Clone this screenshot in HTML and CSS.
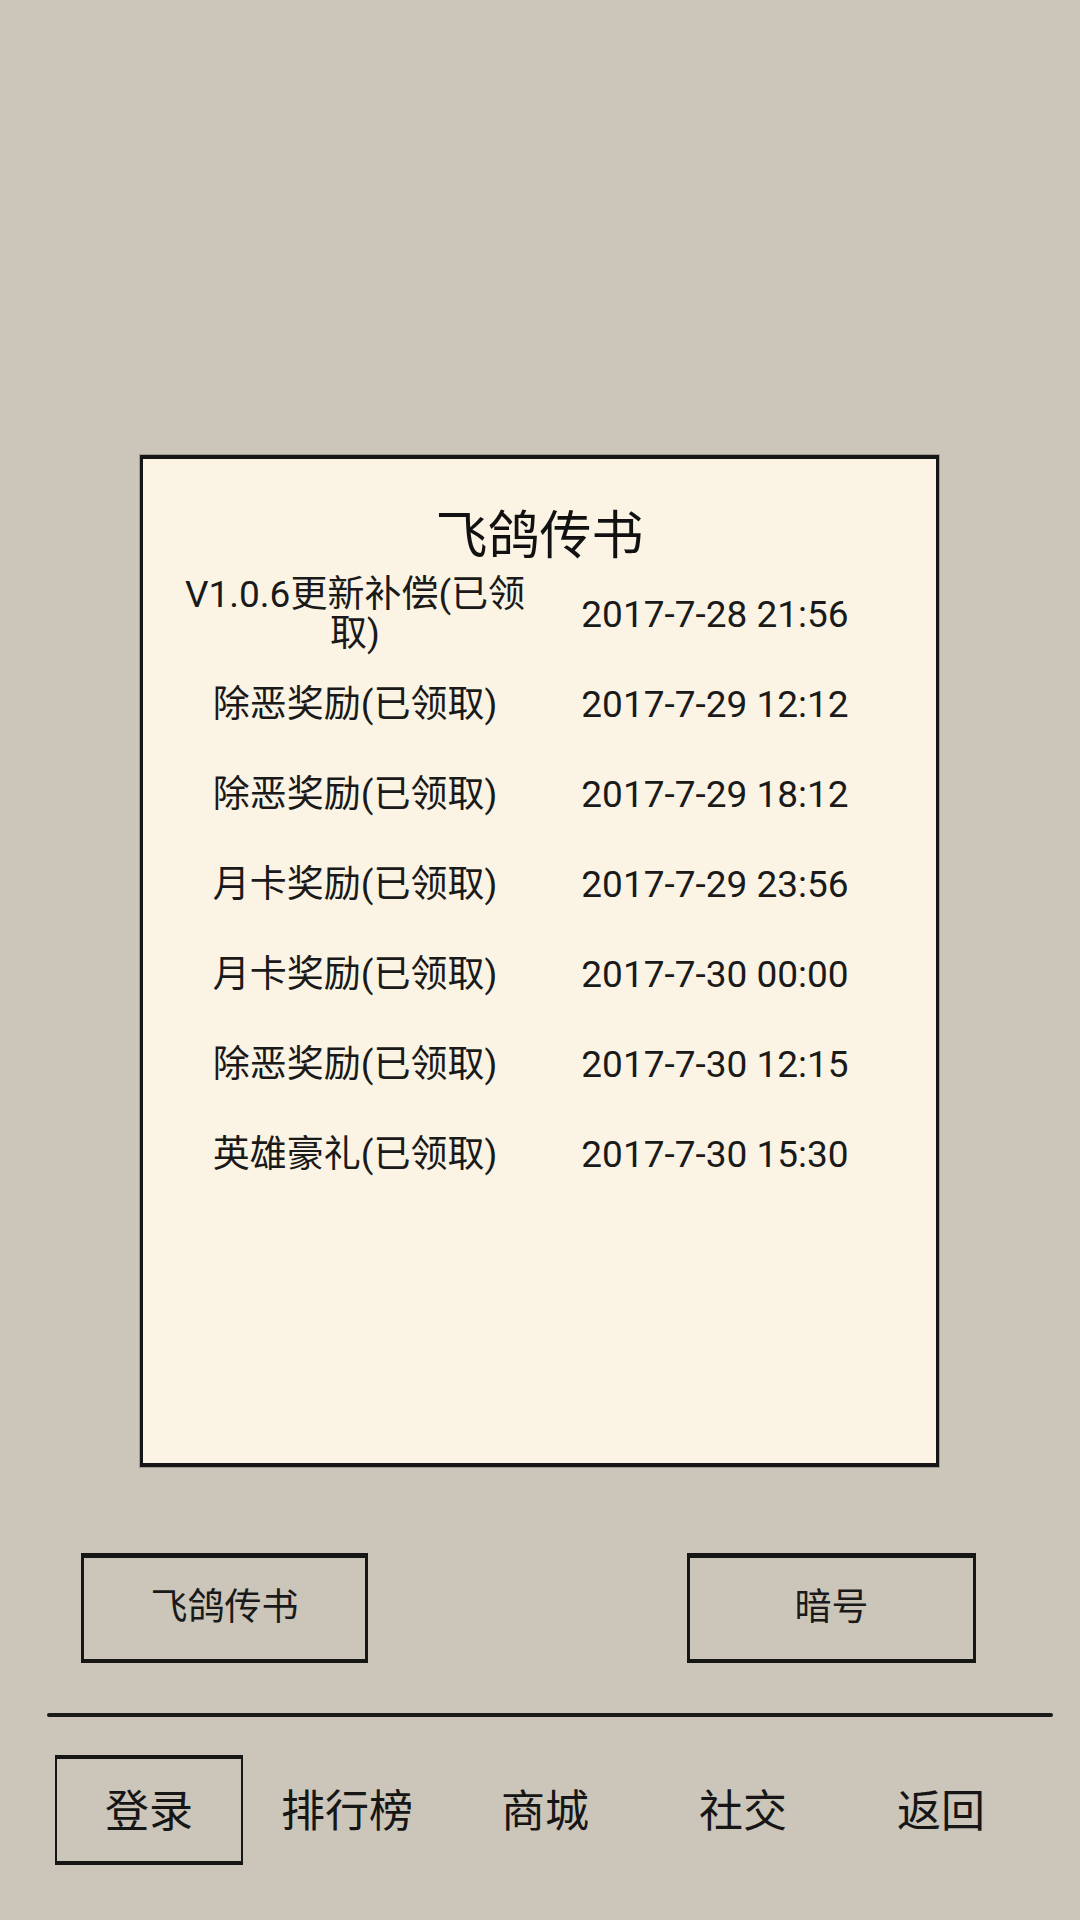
FILE: index.html
```html
<!DOCTYPE html>
<html lang="zh-CN">
<head>
<meta charset="utf-8">
<title>飞鸽传书</title>
<link rel="stylesheet" href="styles.css">
</head>
<body>
<div class="screen">
  <section class="panel">
    <h1 class="title">飞鸽传书</h1>
    <div class="list">
      <div class="row"><span class="name">V1.0.6更新补偿(已领取)</span><span class="time">2017-7-28 21:56</span></div>
      <div class="row"><span class="name">除恶奖励(已领取)</span><span class="time">2017-7-29 12:12</span></div>
      <div class="row"><span class="name">除恶奖励(已领取)</span><span class="time">2017-7-29 18:12</span></div>
      <div class="row"><span class="name">月卡奖励(已领取)</span><span class="time">2017-7-29 23:56</span></div>
      <div class="row"><span class="name">月卡奖励(已领取)</span><span class="time">2017-7-30 00:00</span></div>
      <div class="row"><span class="name">除恶奖励(已领取)</span><span class="time">2017-7-30 12:15</span></div>
      <div class="row"><span class="name">英雄豪礼(已领取)</span><span class="time">2017-7-30 15:30</span></div>
    </div>
  </section>
  <div class="actions">
    <div class="btn">飞鸽传书</div>
    <div class="btn btn-right">暗号</div>
  </div>
  <div class="divider"></div>
  <nav class="nav">
    <div class="nav-item active">登录</div>
    <div class="nav-item">排行榜</div>
    <div class="nav-item">商城</div>
    <div class="nav-item">社交</div>
    <div class="nav-item">返回</div>
  </nav>
</div>
</body>
</html>
```
FILE: styles.css
```css
html, body {
  margin: 0;
  padding: 0;
}
body {
  width: 1080px;
  height: 1920px;
  background: #ccc5b9;
  font-family: Roboto, "Noto Sans CJK SC", sans-serif;
  color: #1a1a1a;
  overflow: hidden;
}
.screen {
  display: flex;
  flex-direction: column;
  padding-top: 455px;
}
.panel {
  box-sizing: border-box;
  width: 799px;
  height: 1012px;
  margin-left: 140px;
  background: #fbf4e5;
  border: 3px solid #161616;
  border-top-width: 4px;
  border-bottom-width: 4px;
  box-shadow: 0 0 0 1px rgba(30,30,30,0.25);
  padding-top: 47px;
}
.title {
  margin: 0;
  font-size: 52px;
  font-weight: 400;
  line-height: 61px;
  text-align: center;
  color: #111;
}
.list {
  display: flex;
  flex-direction: column;
  padding-left: 32px;
  padding-top: 2px;
}
.row {
  display: grid;
  grid-template-columns: 360px 360px;
  align-items: center;
  height: 90px;
  font-size: 37px;
  line-height: 39px;
}
.name, .time {
  text-align: center;
}
.actions {
  display: flex;
  justify-content: space-between;
  padding: 0 104px 0 81px;
  margin-top: 86px;
}
.btn {
  box-sizing: border-box;
  width: 287px;
  height: 110px;
  display: flex;
  align-items: center;
  justify-content: center;
  font-family: "Noto Sans CJK SC", sans-serif;
  font-size: 37px;
  border: 3px solid #161616;
  border-top-width: 5px;
  border-bottom-width: 4px;
  padding-bottom: 9px;
}
.btn-right {
  width: 289px;
}
.divider {
  margin: 50px 27px 0 47px;
  height: 4px;
  border-radius: 2px;
  background: #1a1a1a;
}
.nav {
  display: grid;
  grid-template-columns: repeat(5, 198px);
  margin: 38px 0 0 50px;
}
.nav-item {
  box-sizing: border-box;
  height: 110px;
  display: flex;
  align-items: center;
  justify-content: center;
  font-family: "Noto Sans CJK SC", sans-serif;
  font-size: 44px;
  color: #161616;
  padding-bottom: 5px;
}
.nav-item.active {
  width: 188px;
  margin-left: 5px;
  border: 2px solid #161616;
  border-top-width: 4px;
  border-bottom-width: 4px;
}
```
